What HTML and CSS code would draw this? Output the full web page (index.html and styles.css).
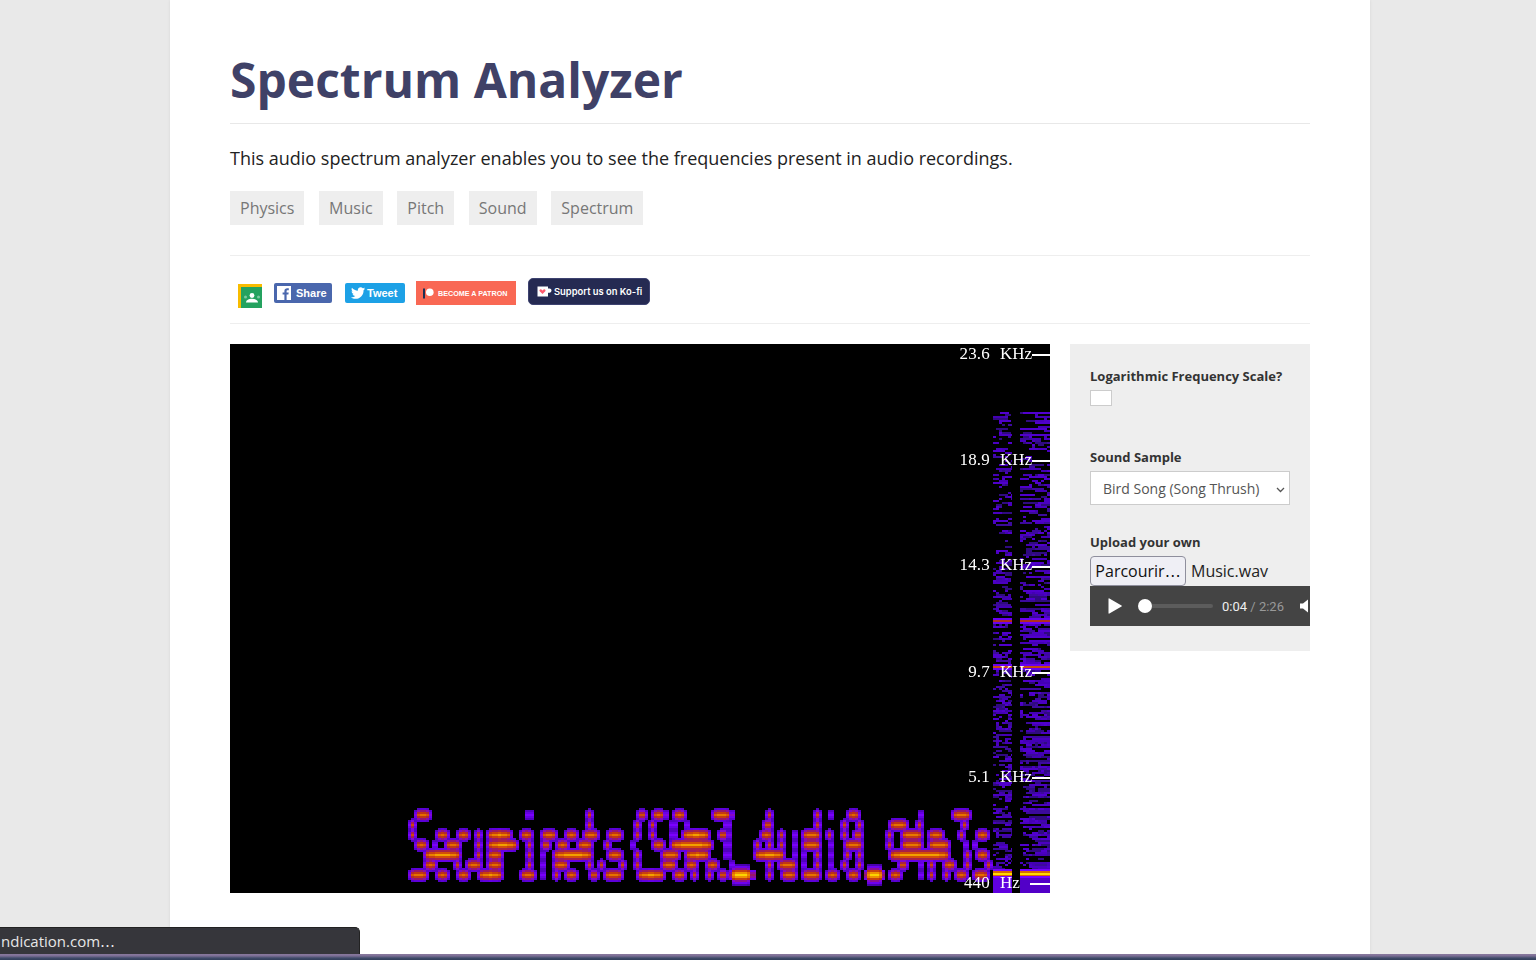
FILE: index.html
```html
<!DOCTYPE html>
<html>
	<head>
		<meta charset="utf-8">
		<title>Spectrum Analyzer</title>
		<link rel="stylesheet" href="styles.css">
	</head>
	<body>
		<div class="page">
			<h1>Spectrum Analyzer</h1>
			<p class="intro">This audio spectrum analyzer enables you to see the frequencies present in audio recordings.</p>

			<div class="tags">
				<a class="tag">Physics</a>
				<a class="tag">Music</a>
				<a class="tag">Pitch</a>
				<a class="tag">Sound</a>
				<a class="tag">Spectrum</a>
			</div>

			<div class="social">
				<svg class="classroom" width="24" height="24" viewBox="0 0 24 24">
					<rect width="24" height="24" fill="#f8bc00" />
					<rect x="3" y="3" width="21" height="21" fill="#24a25f" />
					<circle cx="14" cy="11.500" r="2.400" fill="#fff" />
					<path d="M8 18.500c0-2.600 3-3.800 6-3.800s6 1.200 6 3.800z" fill="#fff" />
					<circle cx="7.500" cy="13" r="1.500" fill="#7cc8a0" />
					<circle cx="20.500" cy="13" r="1.500" fill="#7cc8a0" />
				</svg>
				<a class="badge share">
					<svg width="14" height="14" viewBox="0 0 14 14">
						<rect width="14" height="14" fill="#fff" />
						<path d="M9.600 14V8.600h1.800l.3-2.100H9.600V5.200c0-.6.2-1 1-1h1.200V2.300C11.500 2.300 10.900 2.200 10.200 2.200 8.600 2.200 7.400 3.200 7.400 5v1.500H5.600v2.100h1.800V14z" fill="#4a67ad" />
					</svg>
					Share
				</a>
				<a class="badge tweet">
					<svg width="14" height="12" viewBox="0 0 24 20">
						<path d="M24 2.400c-.9.400-1.800.7-2.800.8 1-.6 1.800-1.600 2.200-2.700-1 .6-2 1-3.100 1.200C19.300.7 18 0 16.600 0c-2.700 0-4.900 2.200-4.900 4.900 0 .4 0 .8.100 1.100C7.700 5.800 4.100 3.900 1.700.9 1.200 1.600 1 2.500 1 3.400c0 1.700.9 3.200 2.200 4.100-.8 0-1.600-.2-2.200-.6v.1c0 2.400 1.700 4.400 3.900 4.800-.7.200-1.500.2-2.200.1.600 1.900 2.400 3.400 4.600 3.400-1.700 1.300-3.800 2.100-6.100 2.100-.4 0-.8 0-1.200-.1C2.200 19.200 4.800 20 7.500 20c9.100 0 14-7.500 14-14v-.6c1-.7 1.800-1.600 2.500-2.600z" fill="#fff" />
					</svg>
					Tweet
				</a>
				<a class="badge patron">
					<svg width="11" height="11" viewBox="0 0 11 11">
						<rect y="0.500" width="2" height="10" fill="#1f2f55" />
						<circle cx="6.800" cy="4.200" r="3.800" fill="#fff" />
					</svg>
					BECOME A PATRON
				</a>
				<a class="badge kofi">
					<svg width="15" height="11" viewBox="0 0 15 11">
						<path d="M0.500 0.500h10.500v2h1.500c1.200 0 2 .8 2 2s-.8 2.200-2 2.200H11v3.800H.5z" fill="#fff" />
						<path d="M5.500 8L2.700 5.200C1.800 4.200 3.300 2.600 4.400 3.500l1.100.9 1.100-.9c1.100-.9 2.600.7 1.700 1.700z" fill="#ff5a6e" />
					</svg>
					Support us on Ko-fi
				</a>
			</div>

			<div class="main">
				<div class="scope">
					<canvas id="spectrum" width="820" height="549"></canvas>
					<div class="mark mark-1"><span class="num">23.6</span><span class="unit">KHz</span><i class="tick"></i></div>
					<div class="mark mark-2"><span class="num">18.9</span><span class="unit">KHz</span><i class="tick"></i></div>
					<div class="mark mark-3"><span class="num">14.3</span><span class="unit">KHz</span><i class="tick"></i></div>
					<div class="mark mark-4"><span class="num">9.7</span><span class="unit">KHz</span><i class="tick"></i></div>
					<div class="mark mark-5"><span class="num">5.1</span><span class="unit">KHz</span><i class="tick"></i></div>
					<div class="mark mark-6"><span class="num">440</span><span class="unit">Hz</span><i class="tick tick-hz"></i></div>
				</div>

				<div class="controls">
					<label class="field-label">Logarithmic Frequency Scale?</label>
					<input class="check" type="checkbox">

					<label class="field-label sample-label">Sound Sample</label>
					<select class="sample">
						<option>Bird Song (Song Thrush)</option>
					</select>

					<label class="field-label upload-label">Upload your own</label>
					<div class="upload">
						<button class="browse">Parcourir<span class="dots">…</span></button>
						<span class="filename">Music.wav</span>
					</div>

					<div class="player">
						<svg class="play" width="14" height="16" viewBox="0 0 14 16"><path d="M0.500 1v14a.6.6 0 0 0 .9.500L13.500 8.500a.6.6 0 0 0 0-1L1.400.5a.6.6 0 0 0-.9.500z" fill="#fff" /></svg>
						<div class="track"><div class="thumb"></div></div>
						<span class="time">0:04 <span class="total">/ 2:26</span></span>
						<svg class="volume" width="14" height="14" viewBox="0 0 14 14"><path d="M0 4.500h3L8 0.500v13l-5-4H0z" fill="#fff" /></svg>
					</div>
				</div>
			</div>
		</div>

		<div class="status">ndication.com<span class="dots">…</span></div>
		<div class="taskbar"></div>

		<script src="spectrum.js"></script>
	</body>
</html>
```

FILE: styles.css
```css
html, body { height:100%; }
body {
	background:#e9e9e9;
	font-family:"Open Sans", sans-serif;
	margin:0;
	overflow:hidden;
}

.page {
	width:1080px;
	height:960px;
	margin:0 auto;
	padding:0 60px;
	background:#fff;
	box-shadow:0 0 3px rgba(0,0,0,0.08);
	position:relative;
	left:2px;
}

h1 {
	margin:0;
	padding:46px 0 10px;
	font-size:48px;
	line-height:67px;
	font-weight:700;
	color:#3f4167;
	border-bottom:1px solid #e8e8e8;
}

.intro {
	margin:21px 0 0;
	font-size:18px;
	line-height:26px;
	color:#222;
}

.tags {
	display:flex;
	gap:14.700px;
	margin-top:20px;
	padding-bottom:30px;
	border-bottom:1px solid #eee;
}
.tag {
	padding:0 10px;
	font-size:16px;
	line-height:34px;
	background:#eee;
	color:#777;
}

.social {
	display:flex;
	align-items:flex-start;
	height:45px;
	padding-top:22px;
	border-bottom:1px solid #eee;
}
.classroom { margin:6px 12px 0 8px; }
.badge {
	display:flex;
	align-items:center;
	font-family:"Liberation Sans", sans-serif;
	font-weight:700;
	color:#fff;
}
.share, .tweet {
	height:20px;
	margin-top:5px;
	border-radius:2px;
	font-size:11px;
}
.share { width:58px; background:#4a67ad; margin-right:13px; gap:5px; padding-left:3px; box-sizing:border-box; }
.tweet { width:60px; background:#1da1e6; margin-right:11px; gap:2px; padding-left:6px; box-sizing:border-box; }
.patron {
	width:100px;
	height:24px;
	margin:3px 12px 0 0;
	padding-left:7px;
	gap:4px;
	box-sizing:border-box;
	background:#f96854;
	font-size:7.200px;
}
.kofi {
	width:122px;
	height:27px;
	padding-left:8px;
	gap:2px;
	box-sizing:border-box;
	background:#252a52;
	border:1px solid #3d4270;
	border-radius:5px;
	font-family:"Inter", sans-serif;
	font-weight:600;
	font-size:9.400px;
}

.main {
	display:flex;
	justify-content:space-between;
	align-items:flex-start;
	margin-top:20px;
}

.scope {
	position:relative;
	width:820px;
	height:549px;
	background:#000;
}
#spectrum { display:block; }

.mark {
	position:absolute;
	left:0;
	display:flex;
	align-items:center;
	width:820px;
	height:20px;
	color:#fff;
	font-family:"Liberation Serif", serif;
	font-size:17px;
}
.num { width:760px; text-align:right; letter-spacing:0.200px; }
.unit { margin-left:10px; }
.tick {
	position:absolute;
	left:802px;
	top:10px;
	width:18px;
	height:2px;
	background:#fff;
}
.tick-hz { left:800px; width:20px; }
.mark-1 { top:0; }
.mark-2 { top:106px; }
.mark-3 { top:212px; }
.mark-3 .num, .mark-3 .unit { margin-top:-2px; }
.mark-4 { top:318px; }
.mark-5 { top:423px; }
.mark-6 { top:529px; }

.controls {
	width:200px;
	height:267px;
	padding:20px;
	background:#eee;
	overflow:hidden;
	color:#333;
}
.field-label {
	display:block;
	font-size:13px;
	line-height:24px;
	font-weight:700;
}
.check {
	display:block;
	appearance:none;
	width:22px;
	height:16px;
	margin:2px 0 0;
	background:#fff;
	border:1px solid #ccc;
	box-sizing:border-box;
	border-radius:0;
}
.sample-label { margin-top:39px; }
.sample {
	display:block;
	appearance:none;
	width:200px;
	height:34px;
	margin-top:2px;
	padding:0 12px;
	font-family:"Open Sans", sans-serif;
	font-size:14px;
	color:#555;
	background:#fff url("data:image/svg+xml,%3Csvg xmlns='http://www.w3.org/2000/svg' width='9' height='6'%3E%3Cpath d='M1 1l3.500 3.500L8 1' fill='none' stroke='%23555' stroke-width='1.300'/%3E%3C/svg%3E") no-repeat 185px 15px;
	border:1px solid #ccc;
	border-radius:0;
}
.upload-label { margin-top:25px; }
.upload {
	display:flex;
	align-items:center;
	margin-top:2px;
	font-size:16px;
	color:#222;
}
.browse {
	width:96px;
	height:30px;
	padding:0;
	font-family:"Open Sans", sans-serif;
	font-size:16px;
	color:#111;
	background:#efeff5;
	border:1px solid #8f8f9d;
	border-radius:4px;
	white-space:nowrap;
}
.dots { font-family:"DejaVu Sans", sans-serif; }
.filename { margin-left:5px; }

.player {
	display:flex;
	align-items:center;
	width:300px;
	height:40px;
	background:#444;
	color:#fff;
}
.play { margin-left:18px; flex:none; }
.track {
	position:relative;
	width:74px;
	height:4px;
	margin-left:17px;
	border-radius:2px;
	background:#5c5c5c;
	flex:none;
}
.thumb {
	position:absolute;
	left:-1px;
	top:-5px;
	width:14px;
	height:14px;
	border-radius:50%;
	background:#fff;
}
.time { margin-left:9px; font-family:"Roboto", sans-serif; font-size:13px; white-space:nowrap; color:#eee; }
.total { color:#999; }
.volume { margin-left:16px; flex:none; }

.status {
	position:fixed;
	left:0;
	bottom:6px;
	width:360px;
	height:27px;
	padding-left:1px;
	box-sizing:border-box;
	border-top:1px solid #222;
	border-right:1px solid #222;
	border-top-right-radius:5px;
	background:#36363b;
	color:#e6e6e6;
	font-size:15px;
	line-height:26px;
}
.taskbar {
	position:fixed;
	left:0;
	right:0;
	bottom:0;
	height:6px;
	background:linear-gradient(#8a7a9e 0, #7d6f96 30%, #3e4a68 70%, #333f5c 100%);
}
```

FILE: spectrum.js
```js
// draws the frozen spectrogram frame onto the canvas
var cv = document.getElementById('spectrum');
var ctx = cv.getContext('2d');

var LEFT = 230, TOP = 344;

// each row of the waterfall: y centre and its [x1, x2] bursts, in page pixels
var rows = [
	[815, [[414,432],[525,533],[585,594],[636,648],[652,669],[672,687],[712,735],[765,774],[813,822],[828,834],[846,861],[918,924],[951,972]]],
	[825, [[408,417],[585,594],[633,642],[648,657],[669,677],[684,690],[723,730],[762,774],[813,822],[840,849],[855,864],[888,909],[915,924],[960,969]]],
	[835, [[408,417],[435,450],[456,471],[474,483],[486,513],[519,534],[540,558],[564,579],[582,600],[606,624],[633,642],[648,657],[669,677],[681,711],[717,730],[759,774],[777,786],[792,798],[801,822],[825,834],[840,849],[852,864],[885,894],[900,924],[927,945],[957,966],[975,990]]],
	[845, [[414,429],[432,438],[444,462],[474,483],[486,519],[525,534],[540,552],[555,570],[576,594],[603,612],[630,636],[651,666],[669,714],[723,730],[753,762],[765,774],[777,786],[792,798],[801,822],[828,834],[843,864],[885,894],[900,924],[927,951],[963,969],[972,978]]],
	[855, [[423,462],[474,483],[486,504],[525,534],[540,546],[552,594],[606,624],[633,642],[660,681],[684,711],[723,730],[753,786],[792,798],[801,807],[813,822],[828,834],[843,852],[855,864],[888,951],[963,972],[975,990]]],
	[865, [[423,438],[453,462],[465,483],[486,504],[525,534],[540,546],[552,570],[585,594],[597,606],[618,627],[633,642],[660,678],[684,699],[705,720],[730,735],[765,774],[777,798],[801,807],[813,822],[828,834],[840,849],[855,864],[897,909],[918,924],[927,936],[942,957],[963,972],[984,993]]],
	[875, [[408,429],[435,450],[456,471],[477,504],[519,537],[540,546],[552,561],[564,579],[588,600],[603,624],[636,666],[672,687],[690,699],[705,714],[717,729],[730,756],[765,774],[780,798],[801,822],[825,840],[846,861],[864,885],[888,903],[918,924],[927,936],[942,951],[954,969],[972,990]]]
];

var stops = [
	[0, 0, 0, 0],
	[0.12, 40, 6, 110],
	[0.3, 92, 0, 215],
	[0.42, 122, 0, 255],
	[0.52, 150, 20, 110],
	[0.66, 190, 50, 20],
	[0.82, 225, 100, 0],
	[0.93, 240, 150, 0],
	[1, 255, 225, 0]
];

function colour(v) {
	v = Math.max(0, Math.min(1, v));
	for (var i = 1; i < stops.length; i++) {
		if (v <= stops[i][0]) {
			var a = stops[i - 1], b = stops[i];
			var t = (v - a[0]) / (b[0] - a[0]);
			return 'rgb(' + Math.round(a[1] + (b[1] - a[1]) * t) + ',' +
				Math.round(a[2] + (b[2] - a[2]) * t) + ',' +
				Math.round(a[3] + (b[3] - a[3]) * t) + ')';
		}
	}
	return 'rgb(255,225,0)';
}

var CW = 3, CH = 2;
var field = {};

function put(cx, cy, v) {
	var k = cx + ':' + cy;
	if (!field[k] || field[k] < v) field[k] = v;
}

// brightness per row away from the burst centre
var normal = [1, 0.8, 0.62, 0.36];
var strong = [1, 0.93, 0.72, 0.5, 0.38, 0.24];

rows.forEach(function (row) {
	var y = row[0];
	row[1].forEach(function (s) {
		var w = s[1] - s[0];
		var big = (s[0] === 730 || s[0] === 864) && y === 875;
		var levels = big ? strong : normal;
		var peak = big ? 1.05 : 0.8 + Math.min(0.14, w / 200);
		for (var x = s[0]; x < s[1]; x += CW) {
			var edge = Math.min(x - s[0], s[1] - x - CW);
			var hx = edge < 3 ? 0.5 : edge < 6 ? 0.86 : edge < 12 ? 0.94 : 1;
			for (var d = 1 - levels.length; d < levels.length; d++) {
				var a = Math.abs(d);
				if (edge < 3 && a > 2) continue;
				put(Math.floor(x / CW), Math.round((y - 1) / CH) + d, peak * hx * levels[a]);
			}
		}
	});
});

Object.keys(field).forEach(function (k) {
	var p = k.split(':');
	ctx.fillStyle = colour(field[k]);
	ctx.fillRect(p[0] * CW - LEFT, p[1] * CH - TOP, CW, CH);
});

// fixed seed, so that every run gives the same noise
var seed = 7;
function rnd() {
	seed = (seed * 16807) % 2147483647;
	return seed / 2147483647;
}

var noise = ['#3c0a9c', '#4a00c0', '#300a80', '#4400b4', '#5000cc'];

// horizontal runs, getting thicker towards the low frequencies
function strip(x1, x2, runs) {
	for (var y = 412; y < 893; y += 2) {
		var depth = (y - 412) / 481;
		var n = Math.round(rnd() * (runs + depth * runs * 1.600));
		for (var i = 0; i < n; i++) {
			var len = 3 + Math.floor(rnd() * rnd() * (x2 - x1) / 3) * 3;
			var x = x1 + Math.floor(rnd() * (x2 - x1) / 3) * 3;
			ctx.fillStyle = noise[Math.floor(rnd() * noise.length)];
			ctx.fillRect(x - LEFT, y - TOP, Math.min(len, x2 - x), 2);
		}
	}
}

strip(993, 1012, 2.400);
strip(1020, 1050, 3.800);

function solid(y1, y2, x1, x2, col) {
	ctx.fillStyle = col;
	ctx.fillRect(x1 - LEFT, y1 - TOP, x2 - x1, y2 - y1);
}

// first rows of the noise, then the low band that stays solid
solid(412, 414, 1000, 1009, '#5200d0');
solid(412, 414, 1023, 1050, '#5200d0');
solid(878, 893, 993, 1012, '#6000e0');
solid(878, 893, 1020, 1050, '#5200c8');

// lines where the recording is loud at that frequency
[[993, 1012], [1020, 1050]].forEach(function (b) {
	solid(618, 624, b[0], b[1], '#6a00f0');
	solid(620, 622, b[0], b[1], '#b0301e');
	solid(664, 670, b[0], b[1], '#6a00f0');
	solid(666, 668, b[0], b[1], '#c84a10');
	solid(869, 878, b[0], b[1], '#7a00ff');
	solid(871, 876, b[0], b[1], '#d86a00');
	solid(873, 875, b[0], b[1], '#ffd800');
});
```
